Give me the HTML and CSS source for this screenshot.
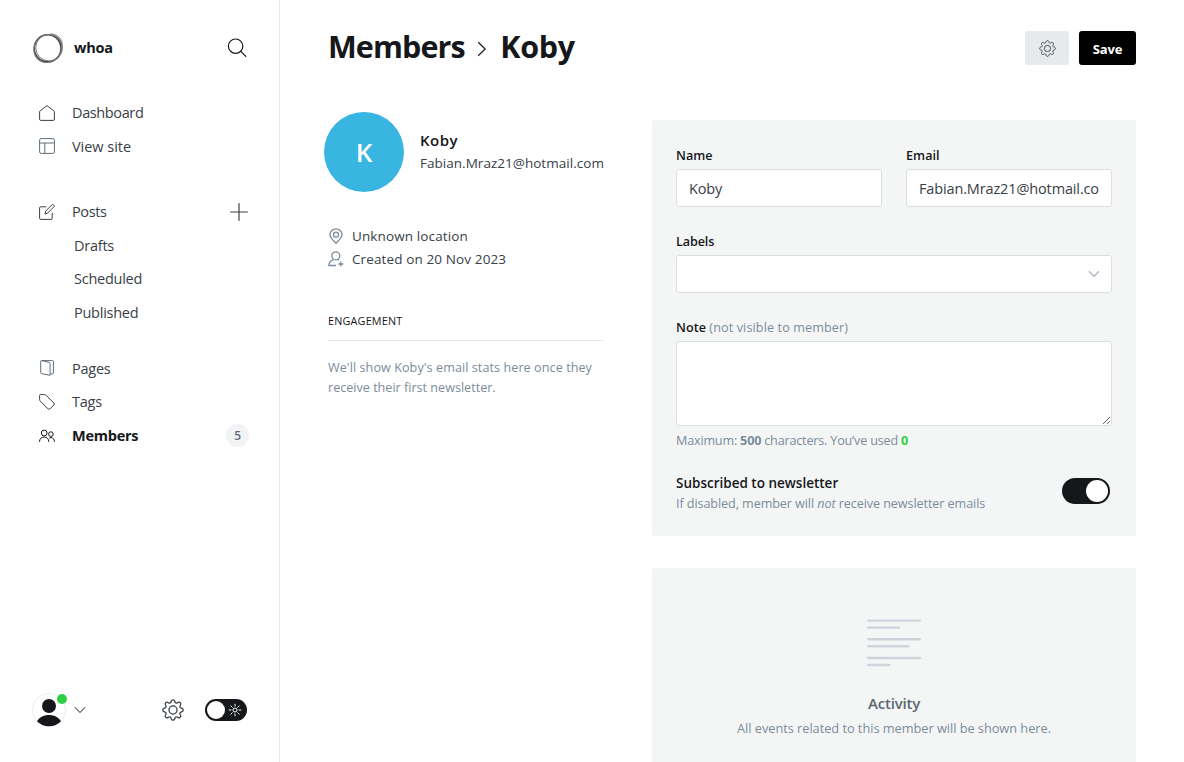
FILE: index.html
```html
<!DOCTYPE html>
<html lang="en">
<head>
<meta charset="utf-8">
<title>Members - Koby</title>
<link rel="stylesheet" href="styles.css">
</head>
<body>
<div class="app">
  <nav class="sidebar">
    <header class="brand">
      <svg class="logo" viewBox="0 0 32 32" fill="none">
        <path d="M17 2.2c6-1.5 13 3 13.3 10 .6 6-1 11-5.3 14.3 3-4 4-8 3.2-12.5C27 8 23 4 17 2.2z" fill="#bbb" stroke="#888" stroke-width=".8"/>
        <circle cx="15.7" cy="16.3" r="13.5" stroke="#444" stroke-width="1.5"/>
        <circle cx="17" cy="15.7" r="13.3" stroke="#777" stroke-width="1"/>
        <ellipse cx="15.8" cy="16.5" rx="14.6" ry="13.2" transform="rotate(-45 15.8 16.5)" stroke="#777" stroke-width="1"/>
      </svg>
      <span class="brand-name">whoa</span>
      <svg class="search" viewBox="0 0 20 20" fill="none" stroke="#15171a" stroke-width="1.2" stroke-linecap="round"><circle cx="8.6" cy="8.2" r="7.2"/><path d="M13.8 13.4L18.8 18.4"/></svg>
    </header>
    <ul class="nav">
      <li class="row tight"><svg class="ico" viewBox="0 0 16 16"><path d="M.6 6.3V14.2a1.2 1.2 0 0 0 1.2 1.2h12.4a1.2 1.2 0 0 0 1.2-1.2V6.3L8 .6z"/></svg><span>Dashboard</span></li>
      <li class="row loose"><svg class="ico soft" viewBox="0 0 16 16"><rect x=".6" y=".6" width="14.8" height="14.8" rx="1.6"/><path d="M.6 5h14.8M5.8 5v10.4"/></svg><span>View site</span></li>
    </ul>
    <ul class="nav nav-posts">
      <li class="row tight"><svg class="ico" viewBox="0 0 16 16"><path d="M7.4 2.8H1.8A1.2 1.2 0 0 0 .6 4v10.2a1.2 1.2 0 0 0 1.2 1.2H12a1.2 1.2 0 0 0 1.2-1.2V8.8M6 10l.7-3L13 .9a1 1 0 0 1 1.5 0l.4.4a1 1 0 0 1 0 1.5L8.8 9z"/></svg><span>Posts</span><svg class="plus" viewBox="0 0 18 18"><path d="M9 .2v17.6M.2 9h17.6"/></svg></li>
      <li class="row sub"><span>Drafts</span></li>
      <li class="row sub raised"><span>Scheduled</span></li>
      <li class="row sub"><span>Published</span></li>
    </ul>
    <ul class="nav nav-content">
      <li class="row"><svg class="ico soft" viewBox="0 0 16 16"><path d="M2.6.6h11a.8.8 0 0 1 .8.8v11.8a.8.8 0 0 1-.8.8h-2.4M2.4.6l7.7 1.7a1.1 1.1 0 0 1 1 1.1v11.9L2.6 13.6a1.1 1.1 0 0 1-.9-1.1V1.2c0-.4.3-.6.7-.6z"/></svg><span>Pages</span></li>
      <li class="row"><svg class="ico" viewBox="0 0 16 16"><path d="M.6 1.5v4.2c0 .5.1.8.4 1.1l8.2 8.2a1.2 1.2 0 0 0 1.6 0l4.2-4.2a1.2 1.2 0 0 0 0-1.6L6.8 1A1.2 1.2 0 0 0 5.7.6H1.5a.9.9 0 0 0-.9.9z"/></svg><span>Tags</span></li>
      <li class="row active"><svg class="ico" viewBox="0 0 16 16"><circle cx="5.2" cy="5" r="2.9"/><circle cx="11.9" cy="6.1" r="2.3"/><path d="M.5 13.8c0-3 2-4.800 4.700-4.800s4.600 1.800 4.600 4.800M10.200 10.200c.5-.4 1.100-.6 1.800-.6 2 0 3.400 1.600 3.400 4.200"/></svg><span>Members</span><b class="count">5</b></li>
    </ul>
    <footer class="side-foot">
      <div class="avatar"><svg viewBox="0 0 34 34"><circle cx="17" cy="17" r="16.5" fill="#fff" stroke="#e9edf0"/><circle cx="17" cy="13" r="7" fill="#15171a"/><path d="M5 28.300C7.500 24 12 22 17 22s9.500 2 12 6.300A16.500 16.500 0 0 1 17 33.300 16.500 16.500 0 0 1 5 28.300z" fill="#15171a"/></svg><i class="dot"></i></div>
      <svg class="chev" viewBox="0 0 12 8"><path d="M.8 1.200L6 6.600 11.200 1.200"/></svg>
      <svg class="gear" viewBox="0 0 24 24"><use href="#gear"/></svg>
      <div class="night"><i class="knob"></i><svg viewBox="0 0 14 14"><circle cx="7" cy="7" r="2"/><path d="M7 .8v2.600M7 10.600v2.600M.8 7h2.600M10.600 7h2.600M2.600 2.600l1.900 1.900M9.500 9.500l1.900 1.900M2.600 11.400l1.900-1.900M9.500 4.500l1.900-1.900"/></svg></div>
    </footer>
  </nav>
  <main class="main">
    <header class="top">
      <h1><span class="crumb">Members</span><svg viewBox="0 0 10 16"><path d="M1.200 1.200L8.200 8 1.200 14.800"/></svg><span class="current">Koby</span></h1>
      <button class="btn btn-gear"><svg viewBox="0 0 24 24"><use href="#gear"/></svg></button>
      <button class="btn btn-save">Save</button>
    </header>
    <div class="cols">
      <aside class="profile">
        <div class="who">
          <div class="initial">K</div>
          <div class="ident"><h3>Koby</h3><p>Fabian.Mraz21@hotmail.com</p></div>
        </div>
        <ul class="meta">
          <li><svg viewBox="0 0 16 16"><path d="M8 15.200C5.500 12.800 2 9.800 2 6.800a6 6 0 0 1 12 0c0 3-3.500 6-6 8.400z"/><circle cx="8" cy="6.700" r="2.500"/></svg><span>Unknown location</span></li>
          <li><svg viewBox="0 0 16 16"><circle cx="7.800" cy="4.800" r="4"/><path d="M8 14.500H.9c0-3.300 1.500-5 4.500-5.900M10 8.700l1 .5M12.800 10.500v5M10.300 13h5"/></svg><span>Created on 20 Nov 2023</span></li>
        </ul>
        <h4>ENGAGEMENT</h4>
        <p class="stats"><span class="first">We'll show Koby's email stats here once they</span><br>receive their first newsletter.</p>
      </aside>
      <div class="panels">
        <section class="panel form">
          <div class="pair">
            <div class="field"><label>Name</label><input type="text" value="Koby"></div>
            <div class="field"><label>Email</label><input type="text" value="Fabian.Mraz21@hotmail.com"></div>
          </div>
          <div class="field"><label class="plain">Labels</label><div class="select"><svg viewBox="0 0 12 8"><path d="M1 1.200L6 6.400 11 1.200"/></svg></div></div>
          <div class="field note"><label>Note <span class="muted">(not visible to member)</span></label><textarea></textarea>
            <p class="hint">Maximum: <b>500</b> characters. You’ve used <b class="used">0</b></p></div>
          <div class="subscribe">
            <div><h5>Subscribed to newsletter</h5><p>If disabled, member will <em>not</em> receive newsletter emails</p></div>
            <div class="switch"><i></i></div>
          </div>
        </section>
        <section class="panel activity">
          <svg viewBox="0 0 54 48"><path d="M1.200 1.600h51.600M1.200 8.600h31M1.200 20.300h51.600M1.200 27.300h40M1.200 39h51.600M1.200 46h21"/></svg>
          <h5>Activity</h5>
          <p>All events related to this member will be shown here.</p>
        </section>
      </div>
    </div>
  </main>
</div>
<svg class="defs"><symbol id="gear" viewBox="0 0 24 24"><circle cx="12" cy="12" r="4.400"/><path d="M10.200 2.100c.5-1.600 3.100-1.600 3.600 0l.4 1.200c.3 1 1.500 1.500 2.400 1l1.200-.6c1.500-.8 3.300 1 2.500 2.500l-.6 1.200c-.5.9 0 2.100 1 2.400l1.200.4c1.600.5 1.600 3.100 0 3.600l-1.200.4c-1 .3-1.500 1.500-1 2.400l.6 1.200c.8 1.500-1 3.300-2.500 2.500l-1.200-.6c-.9-.5-2.100 0-2.400 1l-.4 1.200c-.5 1.600-3.100 1.600-3.600 0l-.4-1.200c-.3-1-1.500-1.500-2.400-1l-1.200.6c-1.500.8-3.300-1-2.500-2.500l.6-1.200c.5-.9 0-2.100-1-2.400l-1.200-.4c-1.600-.5-1.600-3.100 0-3.600l1.200-.4c1-.3 1.500-1.500 1-2.400l-.6-1.200c-.8-1.500 1-3.300 2.500-2.500l1.200.6c.9.5 2.100 0 2.400-1z"/></symbol></svg>
</body>
</html>
```
FILE: styles.css
```css
*{box-sizing:border-box;margin:0;padding:0}
body{font-family:"Open Sans","Noto Sans",sans-serif;color:#15171a;background:#fff;overflow:hidden;height:762px}
ul{list-style:none}
svg{display:block;fill:none;stroke:currentColor;flex:none}
.defs{width:0;height:0;position:absolute}
.app{display:flex;height:762px}
.sidebar{width:280px;border-right:1px solid #e5e7ea;padding:32px 30px 0 32px;display:flex;flex-direction:column;flex:none}
.brand{display:flex;align-items:center;height:32px;margin-bottom:32px}
.logo{width:32px;height:32px}
.brand-name{font-size:14.5px;font-weight:700;margin:0 0 2px 10px;flex:1;letter-spacing:-.2px}
.search{width:20px;height:20px;margin-right:2px}
.nav{color:#394047;font-size:14.5px;letter-spacing:-.25px}
.tight{letter-spacing:-.38px}
.loose{letter-spacing:-.03px}
.row{display:flex;align-items:center;height:33.6px;padding-left:7px}
.row span{white-space:nowrap}
.ico{width:16px;height:16px;margin-right:17px;stroke-width:1}
.soft{color:#626d79}
.sub{padding-left:42px}
.raised{padding-bottom:1px}
.nav-posts{margin-top:32px}
.nav-content{margin-top:22px}
.plus{width:18px;height:18px;margin-left:auto;margin-right:1px;stroke-width:1.2}
.active{color:#15171a;font-weight:700}
.count{margin-left:auto;width:23px;height:23px;border-radius:50%;background:#f1f3f4;color:#626d79;font-size:12px;line-height:24px;text-align:center;font-weight:600}
.side-foot{display:flex;align-items:center;margin-top:auto;margin-bottom:35px;height:34px}
.avatar{position:relative;width:34px;height:34px}
.avatar svg{width:34px;height:34px;stroke:none}
.dot{position:absolute;right:-1px;top:1px;width:10px;height:10px;border-radius:50%;background:#30cf43}
.chev{width:12px;height:8px;margin-left:8px}
.gear{width:22px;height:22px;margin-left:auto;margin-right:21px;stroke-width:1.4;color:#394047}
.night{width:42px;height:22px;border-radius:11px;background:#15171a;padding:2px;display:flex;align-items:center;color:#fff;margin-right:2px}
.knob{width:18px;height:18px;border-radius:50%;background:#fff;margin-right:3px}
.night svg{width:14px;height:14px}
.main{flex:1;padding:0 48px;min-width:0}
.top{display:flex;align-items:center;height:96px}
h1{font-size:30.5px;font-weight:700;display:flex;align-items:center;flex:1;padding-bottom:4px}
h1 svg{width:10px;height:16px;margin:6px 13px 0 12.5px;stroke-width:1.2}
.crumb{letter-spacing:-.9px}
.current{letter-spacing:-.35px}
.btn{border:0;border-radius:3px;height:34px;display:flex;align-items:center;justify-content:center;font-family:inherit}
.btn-gear{width:44px;background:#e6eaed;color:#394047;margin-right:10px}
.btn-gear svg{width:17px;height:17px;stroke-width:1.3}
.btn-save{width:57px;background:#000;color:#fff;font-size:13px;font-weight:700;letter-spacing:-.2px;padding-top:2px}
.cols{display:flex}
.profile{width:276px;margin-right:48px}
.who{display:flex;align-items:center;margin:16px 0 0 -4px;height:80px}
.initial{width:80px;height:80px;border-radius:50%;background:#38b6e1;color:#fff;font-size:26px;font-weight:600;display:flex;align-items:center;justify-content:center;flex:none}
.ident{margin-left:16px;white-space:nowrap}
h3{font-size:15px;font-weight:600;line-height:20px;padding-bottom:2px;letter-spacing:.5px}
.ident p{font-size:13.5px;line-height:22px;color:#394047;letter-spacing:.03px}
.meta{margin-top:32px;font-size:13.5px;color:#394047;letter-spacing:.12px}
.meta li{display:flex;align-items:center;height:23px}
.meta svg{width:16px;height:16px;color:#7c8b9a;margin-right:8px;stroke-width:1.3}
h4{font-size:10.8px;font-weight:400;margin-top:43px;height:28px;border-bottom:1px solid #e6e9eb;line-height:16px;letter-spacing:.2px}
.stats{font-size:12.6px;line-height:20px;color:#7c8b9a;margin-top:17px;white-space:nowrap}
.first{letter-spacing:.07px}
.panels{width:484px;padding-top:24px}
.panel{background:#f4f6f6;border-radius:3px}
.form{height:416px;padding:24px}
.pair{display:flex;gap:24px}
.pair .field{width:206px}
.field{margin-bottom:23px}
label{display:block;font-size:12.6px;font-weight:600;line-height:22px;padding-top:1px;margin-bottom:2px;white-space:nowrap;letter-spacing:.05px}
.plain{letter-spacing:-.1px}
.muted{font-weight:400;color:#7c8b9a;letter-spacing:.12px}
input,.select,textarea{display:block;width:100%;height:38px;border:1px solid #dcdfe1;border-radius:3px;background:#fff;padding:0 12px;font:14.5px "Open Sans",sans-serif;letter-spacing:-.14px;color:#394047;outline:0}
.select{display:flex;align-items:center;justify-content:flex-end;padding-right:11px;color:#abb4be}
.select svg{width:12px;height:8px;stroke-width:1.3}
textarea{height:85px}
.hint,.subscribe p{font-size:12.6px;line-height:20px;color:#7c8b9a;white-space:nowrap}
.hint{margin-top:5px;letter-spacing:-.18px}
.used{color:#30cf43}
.subscribe{display:flex;justify-content:space-between;align-items:center;padding-right:2px}
.subscribe p{letter-spacing:-.08px}
h5{font-size:13.5px;font-weight:600;line-height:20px}
.subscribe h5{line-height:18px;padding-bottom:2px}
.switch{width:48px;height:26px;border-radius:13px;background:#15171a;padding:2px;display:flex;justify-content:flex-end;margin-top:-7px}
.switch i{width:22px;height:22px;border-radius:50%;background:#fff}
.activity{margin-top:32px;height:220px;padding-top:51px;display:flex;flex-direction:column;align-items:center}
.activity svg{width:54px;height:48px;stroke:#ced4d9;stroke-width:2.4;stroke-linecap:round}
.activity h5{font-size:15px;color:#5b6672;margin-top:26px;letter-spacing:-.2px}
.activity p{font-size:12.8px;color:#7c8b9a;margin-top:5px;line-height:20px;white-space:nowrap;letter-spacing:-.04px}
```
